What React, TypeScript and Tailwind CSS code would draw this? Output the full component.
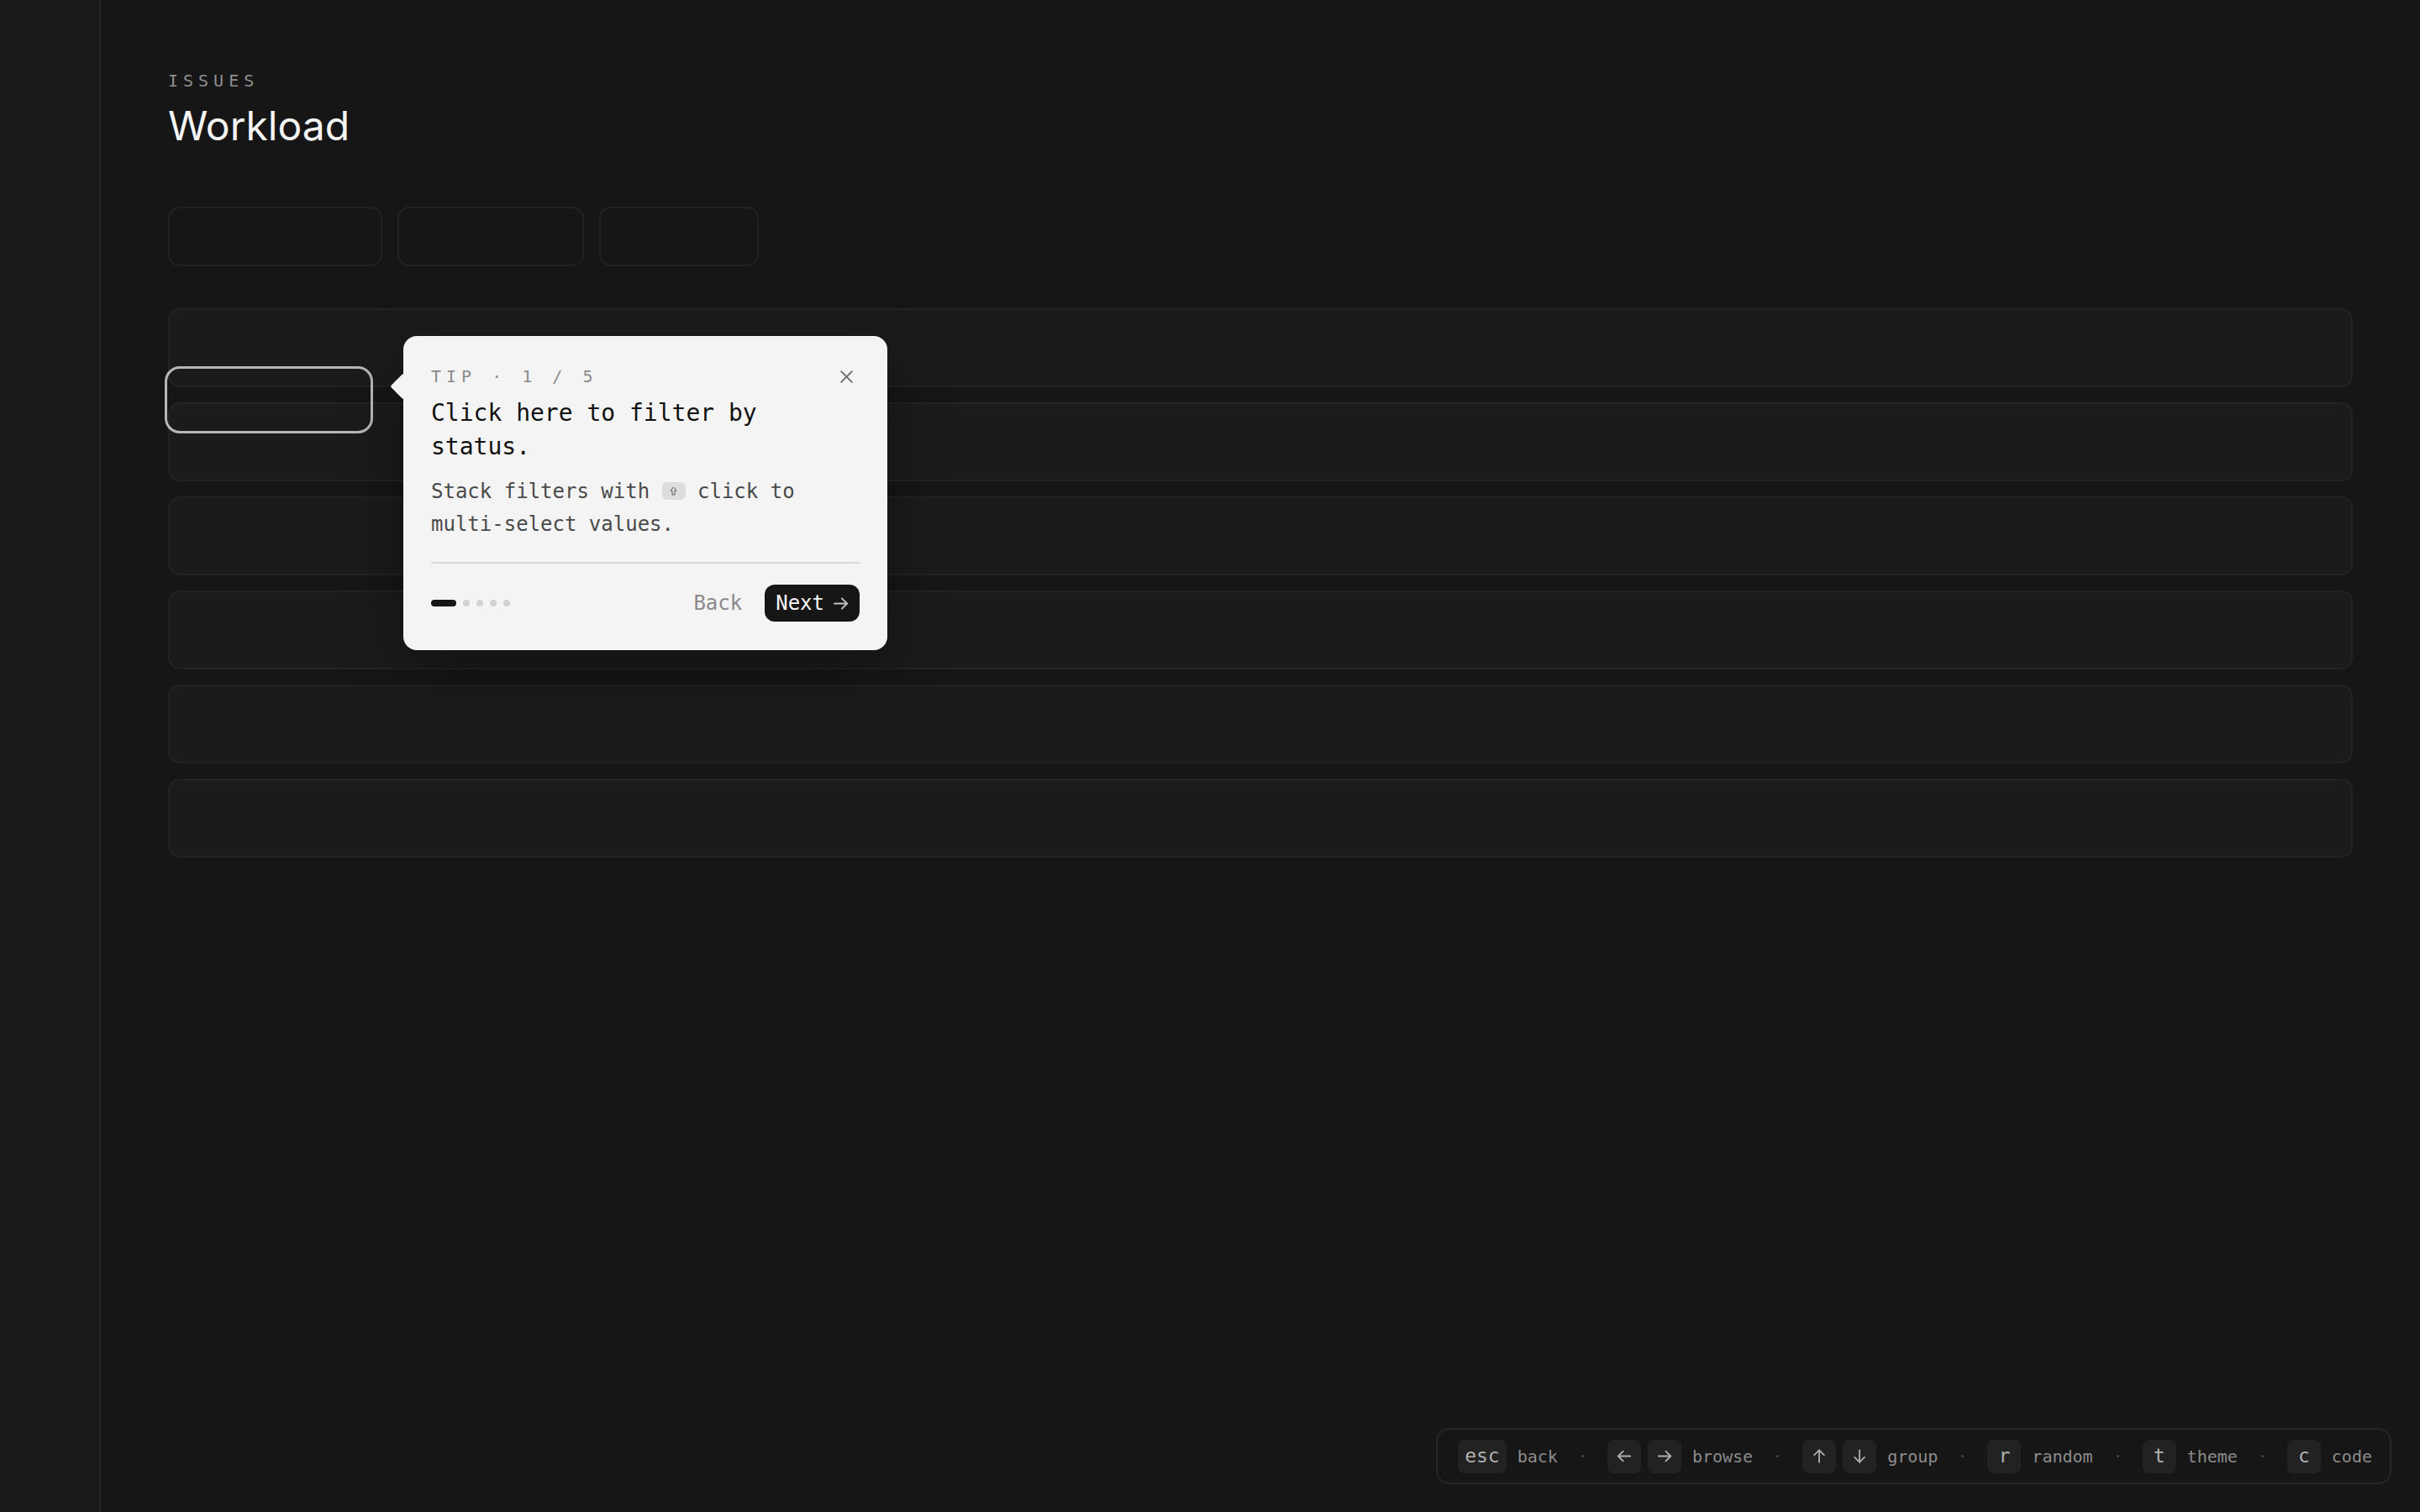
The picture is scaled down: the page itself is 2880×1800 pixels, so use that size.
import { Fragment } from 'react'

const MONO = 'font-["DejaVu_Sans_Mono",monospace]'

const ROWS = [0, 1, 2, 3, 4, 5]
const CHIPS = ['w-[255px]', 'w-[222px]', 'w-[190px]']

function ArrowGlyph({ dir, className = '' }: { dir: 'left' | 'right' | 'up' | 'down'; className?: string }) {
  const rot = { right: 'rotate-0', left: 'rotate-180', up: '-rotate-90', down: 'rotate-90' }[dir]
  return (
    <svg viewBox="0 0 20 16" className={`${rot} ${className}`} fill="none" stroke="currentColor" strokeWidth="2" strokeLinecap="round" strokeLinejoin="round">
      <path d="M2 8h16" />
      <path d="M11.5 1.5 18 8l-6.5 6.5" />
    </svg>
  )
}

function Key({ children, wide }: { children: React.ReactNode; wide?: boolean }) {
  return (
    <span className={`flex h-[40px] items-center justify-center rounded-[8px] bg-[#222222] text-[23px] leading-none text-[#b0b0b0] ${wide ? 'px-[8px]' : 'w-[40px]'}`}>
      {children}
    </span>
  )
}

const SHORTCUTS: { keys: React.ReactNode[]; label: string; wide?: boolean }[] = [
  { keys: ['esc'], label: 'back', wide: true },
  { keys: [<ArrowGlyph key="l" dir="left" className="w-[18px] h-[15px]" />, <ArrowGlyph key="r" dir="right" className="w-[18px] h-[15px]" />], label: 'browse' },
  { keys: [<ArrowGlyph key="u" dir="up" className="w-[18px] h-[15px]" />, <ArrowGlyph key="d" dir="down" className="w-[18px] h-[15px]" />], label: 'group' },
  { keys: ['r'], label: 'random' },
  { keys: ['t'], label: 'theme' },
  { keys: ['c'], label: 'code' },
]

function TipPopover() {
  return (
    <div className={`absolute left-[480px] top-[400px] w-[576px] rounded-[16px] bg-[#f4f4f4] px-[33px] pt-[32px] pb-[34px] shadow-[0_24px_70px_rgba(0,0,0,0.35)] ${MONO}`}>
      {/* pointer */}
      <div className="absolute left-[-11px] top-[49px] h-[22px] w-[22px] rotate-45 rounded-[2px] bg-[#f4f4f4]" />

      <div className="relative flex h-[32px] items-center justify-between">
        <span className="text-[20px] leading-[28px] tracking-[0.3em] text-[#8a8a8a]">TIP · 1 / 5</span>
        <button className="flex h-[32px] w-[32px] items-center justify-center text-[#6b6b6b]">
          <svg viewBox="0 0 16 16" className="h-[17px] w-[17px]" fill="none" stroke="currentColor" strokeWidth="1.7" strokeLinecap="round">
            <path d="M2 2l12 12M14 2 2 14" />
          </svg>
        </button>
      </div>

      <h2 className="mt-[8px] text-[28px] leading-[40px] font-normal text-[#111111]">Click here to filter by status.</h2>

      <p className="mt-[14px] text-[24px] leading-[39px] text-[#4a4a4a]">
        Stack filters with{' '}
        <span className="inline-flex h-[21px] w-[28px] translate-y-[-2px] items-center justify-center rounded-[6px] bg-[#dddddd] align-middle text-[#5a5a5a]">
          <svg viewBox="0 0 10 12" className="h-[11px] w-[9px]" fill="none" stroke="currentColor" strokeWidth="1.1" strokeLinejoin="round">
            <path d="M5 1 1 5.5h2.3V11h3.4V5.5H9Z" />
          </svg>
        </span>{' '}
        click to multi-select values.
      </p>

      <div className="mt-[25px] h-[2px] bg-[#d8d8d8]" />

      <div className="mt-[25px] flex h-[44px] items-center justify-between">
        <div className="flex items-center gap-[8px]">
          <span className="h-[8px] w-[30px] rounded-full bg-[#161616]" />
          <span className="h-[8px] w-[8px] rounded-full bg-[#d2d2d2]" />
          <span className="h-[8px] w-[8px] rounded-full bg-[#d2d2d2]" />
          <span className="h-[8px] w-[8px] rounded-full bg-[#d2d2d2]" />
          <span className="h-[8px] w-[8px] rounded-full bg-[#d2d2d2]" />
        </div>
        <div className="flex items-center gap-[27px]">
          <button className="text-[24px] leading-none text-[#8a8a8a]">Back</button>
          <button className="flex h-[44px] items-center gap-[10px] rounded-[12px] bg-[#161616] px-[13px] text-[24px] leading-none text-[#f5f5f5]">
            Next
            <ArrowGlyph dir="right" className="h-[15px] w-[19px] text-[#c4c4c4]" />
          </button>
        </div>
      </div>
    </div>
  )
}

export default function App() {
  return (
    <div className="relative flex h-screen w-full overflow-hidden bg-[#161616] font-['Inter',sans-serif]">
      {/* sidebar */}
      <aside className="w-[120px] shrink-0 border-r-2 border-[#252525] bg-[#1b1b1b]" />

      {/* main */}
      <main className="flex-1 px-20 pt-[82px]">
        <div className={`text-[20px] leading-[28px] tracking-[0.3em] text-[#8f8f8f] ${MONO}`}>ISSUES</div>
        <h1 className="mt-[12px] text-[48px] leading-[55px] font-normal text-[#f5f5f5]">Workload</h1>

        <div className="mt-[69px] flex gap-[18px]">
          {CHIPS.map((w, i) => (
            <div key={i} className={`${w} h-[71px] rounded-[14px] border-2 border-[#222222] bg-[#161616]`} />
          ))}
        </div>

        <div className="mt-[50px] flex flex-col gap-[18px]">
          {ROWS.map(r => (
            <div key={r} className="h-[94px] rounded-[14px] border-2 border-[#232323] bg-[#1b1b1b]" />
          ))}
        </div>
      </main>

      {/* highlighted target */}
      <div className="absolute left-[196px] top-[436px] h-[80px] w-[248px] rounded-[18px] border-[3px] border-[#b8b8b8]" />

      <TipPopover />

      {/* shortcut bar */}
      <div className={`absolute bottom-[33px] right-[34px] flex h-[67px] items-center rounded-[16px] border-2 border-[#262626] bg-[#161616] pl-[24px] pr-[21px] ${MONO}`}>
        {SHORTCUTS.map((s, i) => (
          <Fragment key={s.label}>
            {i > 0 && <span className="mx-[28px] h-[3px] w-[3px] rounded-full bg-[#4a4a4a]" />}
            <div className="flex items-center gap-[13px]">
              <div className="flex items-center gap-[8px]">
                {s.keys.map((k, j) => (
                  <Key key={j} wide={s.wide}>{k}</Key>
                ))}
              </div>
              <span className="text-[20px] leading-none text-[#8c8c8c]">{s.label}</span>
            </div>
          </Fragment>
        ))}
      </div>
    </div>
  )
}
